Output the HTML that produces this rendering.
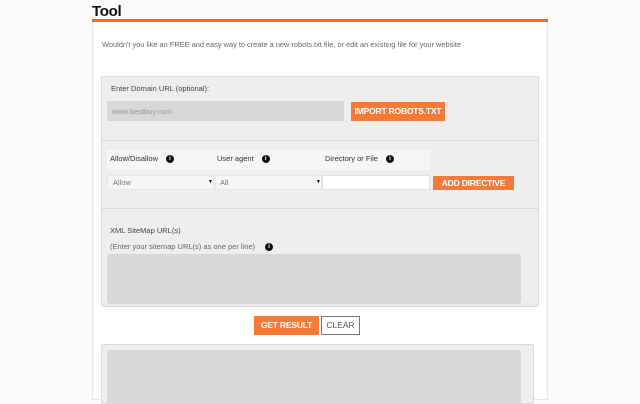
<!DOCTYPE html>
<html><head><style>
*{margin:0;padding:0;box-sizing:border-box}
body{width:640px;height:400px;background:#fafafa;font-family:"Liberation Sans",Arial,sans-serif;position:relative;overflow:hidden}
.a{position:absolute;white-space:nowrap}
.t{font-size:7.5px;color:#555}
.i{display:inline-block;width:8px;height:8px;border-radius:50%;background:#111;color:#fff;font-size:6px;line-height:8px;text-align:center;font-weight:bold;vertical-align:middle;margin-left:8px}
.btn{background:#f47a3a;color:#fff;font-weight:bold;font-size:8.5px;text-align:center;letter-spacing:-0.2px}
</style></head><body>
<div class="a" style="left:92px;top:3px;font-size:15px;font-weight:bold;color:#111;letter-spacing:-0.3px">Tool</div>
<div class="a" style="left:92px;top:20px;width:456px;height:380px;background:#fff;border:1px solid #e6e6e6;border-top:none"></div>
<div class="a" style="left:92px;top:19px;width:456px;height:3px;background:#f26b1d"></div>
<div class="a t" style="left:102px;top:40px;color:#666;font-size:7.4px">Wouldn't you like an FREE and easy way to create a new robots.txt file, or edit an existing file for your website</div>

<div class="a" style="left:101px;top:76px;width:438px;height:231px;background:#eeeeee;border:1px solid #dadada;border-radius:2px"></div>
<div class="a" style="left:102px;top:140px;width:436px;height:1px;background:#dadada"></div>
<div class="a" style="left:102px;top:208px;width:436px;height:1px;background:#dadada"></div>
<div class="a t" style="left:111px;top:84px;color:#444">Enter Domain URL (optional):</div>
<div class="a" style="left:107px;top:101px;width:237px;height:20px;background:#d8d8d8"></div>
<div class="a t" style="left:112px;top:107px;color:#999">www.bestbuy.com</div>
<div class="a btn" style="left:351px;top:102px;width:94px;height:19px;line-height:19px">IMPORT ROBOTS.TXT</div>

<div class="a" style="left:107px;top:150px;width:323px;height:20px;background:#f6f6f6"></div>
<div class="a t" style="left:110px;top:154px;color:#333">Allow/Disallow<span class="i">i</span></div>
<div class="a t" style="left:217px;top:154px;color:#333">User agent<span class="i">i</span></div>
<div class="a t" style="left:325px;top:154px;color:#333">Directory or File<span class="i">i</span></div>
<div class="a" style="left:107px;top:175px;width:107px;height:15px;background:#f6f6f6;border:1px solid #e8e8e8"></div>
<div class="a t" style="left:113px;top:178px;color:#777">Allow</div><div class="a" style="left:208px;top:179px;font-size:5px">▼</div>
<div class="a" style="left:215px;top:175px;width:107px;height:15px;background:#f6f6f6;border:1px solid #e8e8e8"></div>
<div class="a t" style="left:220px;top:178px;color:#777">All</div><div class="a" style="left:316px;top:179px;font-size:5px">▼</div>
<div class="a" style="left:322px;top:175px;width:108px;height:15px;background:#fff;border:1px solid #e0e0e0"></div>
<div class="a btn" style="left:433px;top:176px;width:81px;height:14px;line-height:14px">ADD DIRECTIVE</div>

<div class="a t" style="left:110px;top:226px;color:#444">XML SiteMap URL(s)</div>
<div class="a t" style="left:110px;top:242px;color:#666">(Enter your sitemap URL(s) as one per line)<span class="i" style="margin-left:10px">i</span></div>
<div class="a" style="left:107px;top:254px;width:414px;height:50px;background:#d8d8d8;border-radius:3px"></div>

<div class="a btn" style="left:254px;top:316px;width:65px;height:19px;line-height:19px">GET RESULT</div>
<div class="a" style="left:321px;top:316px;width:39px;height:19px;line-height:17px;border:1px solid #777;background:#fff;font-size:8.5px;color:#555;text-align:center">CLEAR</div>

<div class="a" style="left:101px;top:344px;width:433px;height:60px;background:#eeeeee;border:1px solid #dadada;border-radius:2px"></div>
<div class="a" style="left:107px;top:350px;width:414px;height:54px;background:#d8d8d8;border-radius:3px"></div>
</body></html>
